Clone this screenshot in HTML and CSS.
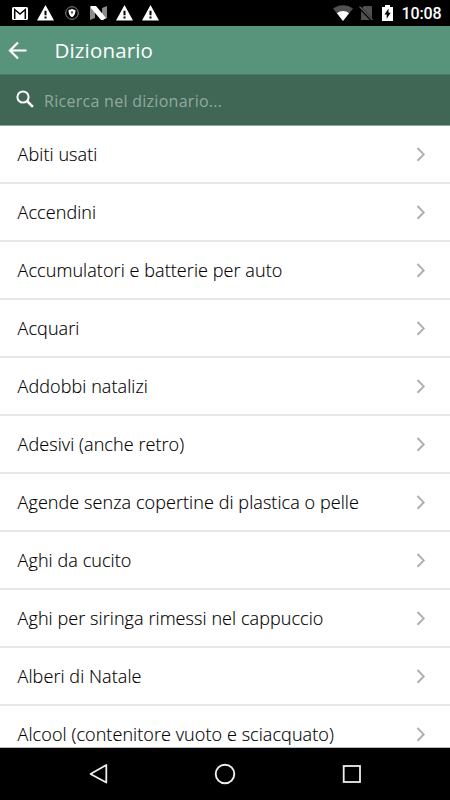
FILE: index.html
```html
<!DOCTYPE html>
<html lang="it">
<head>
<meta charset="utf-8">
<title>Dizionario</title>
<link rel="stylesheet" href="styles.css">
</head>
<body>
<svg class="defs" aria-hidden="true">
  <symbol id="warn" viewBox="0 0 17 16"><path fill="#fff" fill-rule="evenodd" d="M8.5 0 17 15.5H0ZM7.5 5.8v4.4h2V5.8ZM7.5 11.6v2h2v-2Z"/></symbol>
  <symbol id="chevron" viewBox="0 0 10 16"><path fill="none" stroke="#b0b0b0" stroke-width="2" d="m1.500 2 6.200 6.400-6.200 6.400"/></symbol>
</svg>
<div class="screen">
  <div class="status">
    <div class="notifications">
      <svg width="16" height="13" viewBox="0 0 16 13"><rect width="16" height="13" rx="1.5" fill="#fff"/><path d="M2.700 12V2.500L8 7l5.300-4.500V12" fill="none" stroke="#000" stroke-width="1.500"/></svg>
      <svg width="17" height="16"><use href="#warn"/></svg>
      <svg width="14" height="14" viewBox="0 0 14 14"><circle cx="7" cy="7" r="6.3" fill="none" stroke="#8a8a8a"/><path d="M7 2.800c1.200.9 2.200 1.100 3.500 1.200 0 3.400-.8 5.600-3.500 7.200C4.300 9.600 3.500 7.400 3.500 4 4.800 3.900 5.800 3.700 7 2.800Z" fill="#fff"/><path d="M5.700 5.500h2.600L7 8.500Z" fill="#333"/></svg>
      <svg width="17" height="14" viewBox="0 0 17 14"><path d="M0 2 5 0v12l-5 2ZM12 2l5-2v12l-5 2Z" fill="#8a8a8a"/><path d="M1 0h5l10 12-3 2h-2L0 1Z" fill="#fff"/></svg>
      <svg width="17" height="16"><use href="#warn"/></svg>
      <svg width="17" height="16"><use href="#warn"/></svg>
    </div>
    <div class="system">
      <svg width="20" height="16" viewBox="0 0 20 16"><path d="M0 3.500C6-1 14-1 20 3.500L10 16Z" fill="#505050"/><path d="M4 8.300c3.500-3 8.500-3 12 0L10 16Z" fill="#fff"/></svg>
      <svg width="14" height="16" viewBox="0 0 14 16"><path d="M5 1h7q1 0 1 1v13H2V4Z" fill="#505050"/><path d="m0 2 13 13" stroke="#000" stroke-width="3"/><path d="m.5 1.500 13 13.500" stroke="#606060" stroke-width="1.200"/></svg>
      <svg width="11" height="16" viewBox="0 0 11 16"><path d="M3 0h5v2h3v14H0V2h3Z" fill="#fff"/><path d="M6.500 3.500 2.500 9.500h2.200v4.200l4-6H6.500Z" fill="#000"/></svg>
      <span class="clock">10:08</span>
    </div>
  </div>
  <header class="toolbar">
    <svg width="20" height="20" viewBox="0 0 20 20"><path d="M18.500 10.500H2.500M10 2.500l-8 8 8 8" fill="none" stroke="#fff" stroke-width="2.200"/></svg>
    <h1>Dizionario</h1>
  </header>
  <div class="search">
    <svg width="19" height="19" viewBox="0 0 19 19"><circle cx="7" cy="7" r="5.600" fill="none" stroke="#fff" stroke-width="2"/><path d="m11 11 5.900 5.900" stroke="#fff" stroke-width="2.500"/></svg>
    <span>Ricerca nel dizionario...</span>
  </div>
  <ul class="list">
    <li><span>Abiti usati</span><svg width="10" height="16"><use href="#chevron"/></svg></li>
    <li><span>Accendini</span><svg width="10" height="16"><use href="#chevron"/></svg></li>
    <li><span>Accumulatori e batterie per auto</span><svg width="10" height="16"><use href="#chevron"/></svg></li>
    <li><span>Acquari</span><svg width="10" height="16"><use href="#chevron"/></svg></li>
    <li><span>Addobbi natalizi</span><svg width="10" height="16"><use href="#chevron"/></svg></li>
    <li><span>Adesivi (anche retro)</span><svg width="10" height="16"><use href="#chevron"/></svg></li>
    <li><span>Agende senza copertine di plastica o pelle</span><svg width="10" height="16"><use href="#chevron"/></svg></li>
    <li><span>Aghi da cucito</span><svg width="10" height="16"><use href="#chevron"/></svg></li>
    <li><span>Aghi per siringa rimessi nel cappuccio</span><svg width="10" height="16"><use href="#chevron"/></svg></li>
    <li><span>Alberi di Natale</span><svg width="10" height="16"><use href="#chevron"/></svg></li>
    <li><span>Alcool (contenitore vuoto e sciacquato)</span><svg width="10" height="16"><use href="#chevron"/></svg></li>
  </ul>
  <nav class="navbar">
    <svg width="22" height="22" viewBox="0 0 22 22"><path d="M19.300 2v17.500L3.500 11Z" fill="none" stroke="#eee" stroke-width="1.800" stroke-linejoin="round"/></svg>
    <svg width="22" height="22" viewBox="0 0 22 22"><circle cx="11" cy="11" r="9.300" fill="none" stroke="#eee" stroke-width="1.900"/></svg>
    <svg width="22" height="22" viewBox="0 0 22 22"><rect x="2.700" y="3" width="16.300" height="16" fill="none" stroke="#eee" stroke-width="1.800"/></svg>
  </nav>
</div>
</body>
</html>
```
FILE: styles.css
```css
* { box-sizing: border-box; }
body { margin: 0; font-family: "Open Sans", sans-serif; background: #fff; }
svg { display: block; flex: none; }
.defs { position: absolute; width: 0; height: 0; }
.screen { width: 450px; height: 800px; display: flex; flex-direction: column; overflow: hidden; }

.status { flex: none; height: 26px; background: #000; display: flex; justify-content: space-between; padding: 0 8.500px 0 12px; }
.notifications { display: flex; align-items: center; gap: 9px; }
.notifications svg:nth-child(3) { margin-left: 2px; margin-right: 2px; }
.system { display: flex; align-items: center; gap: 8px; }
.system svg:nth-child(1) { margin-right: -2px; }
.system svg:nth-child(2) { margin-right: 1px; }
.clock { font: 500 16px/26px Roboto, sans-serif; color: #fff; letter-spacing: -.1px; padding-top: 1px; }

.toolbar { flex: none; height: 48px; background: #58947b; display: flex; align-items: center; padding-left: 8px; gap: 26.500px; }
.toolbar h1 { margin: 0; font-size: 20.500px; line-height: 28px; padding-bottom: 1px; font-weight: 400; letter-spacing: .15px; color: #fff; }

.search { flex: none; height: 52px; background: #406656; border-top: 1px solid #4b7a67; border-bottom: 1px solid #8ba69b; display: flex; align-items: center; padding-left: 16px; gap: 9px; }
.search svg { margin-bottom: 2px; }
.search span { font-size: 16px; line-height: 22px; color: #91aa9f; letter-spacing: .28px; padding-top: 1px; }

.list { flex: 1; min-height: 0; overflow: hidden; margin: 0; padding: 0; list-style: none; border-bottom: 1px solid #bbb; }
.list li { height: 58px; border-bottom: 2px solid #e7e7e7; display: flex; align-items: center; justify-content: space-between; padding: 0 24px 0 17.600px; font-size: 18px; line-height: 24px; font-weight: 300; letter-spacing: .075px; color: #000; -webkit-text-stroke: .15px #000; }

.navbar { flex: none; height: 52px; background: #000; display: flex; align-items: center; justify-content: space-between; padding: 0 87px; }
```
